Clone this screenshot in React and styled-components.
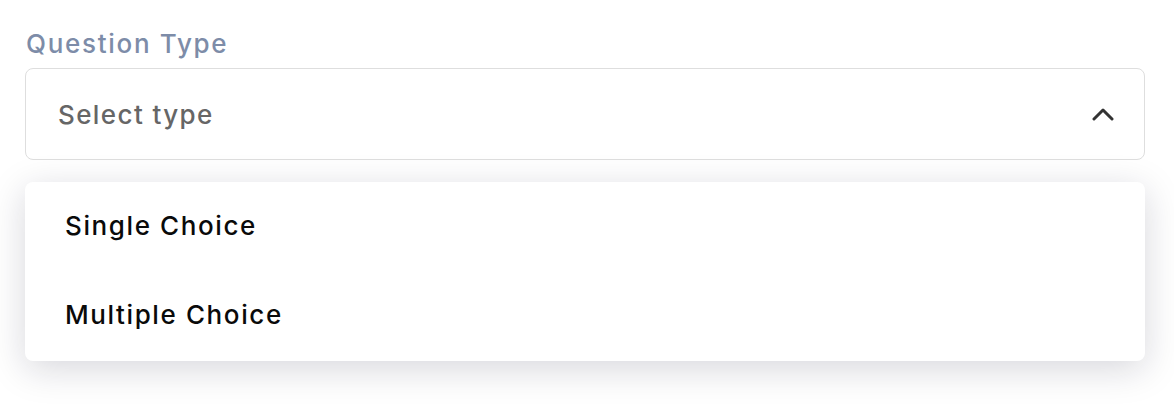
import React from "react";
import styled, { createGlobalStyle } from "styled-components";

const Global = createGlobalStyle`
  html, body { margin: 0; padding: 0; background: #ffffff; }
  body { font-family: Inter, "Noto Sans", sans-serif; }
`;

const Page = styled.div`
  min-height: 408px;
  box-sizing: border-box;
  padding: 28px 29px 0 25px;
  display: flex;
  flex-direction: column;
`;

const Label = styled.div`
  font-size: 26px;
  font-weight: 500;
  letter-spacing: 1.7px;
  line-height: 32px;
  color: #7d8ca8;
  padding-left: 1px;
  margin-bottom: 8px;
`;

const SelectBox = styled.div`
  height: 92px;
  box-sizing: border-box;
  border: 1px solid #dedede;
  border-radius: 8px;
  display: flex;
  align-items: center;
  justify-content: space-between;
  padding: 0 30px 0 32px;
  background: #fff;
`;

const Placeholder = styled.span`
  font-size: 26px;
  font-weight: 500;
  letter-spacing: 1.4px;
  color: #666666;
`;

const Menu = styled.div`
  margin-top: 22px;
  border-radius: 8px;
  background: #fff;
  box-shadow: 0 8px 36px rgba(20, 20, 50, 0.17);
  display: flex;
  flex-direction: column;
  padding: 0 0 1px;
`;

const Item = styled.div`
  height: 89px;
  box-sizing: border-box;
  padding: 0 0 3px 40px;
  display: flex;
  align-items: center;
  font-size: 26px;
  font-weight: 500;
  letter-spacing: 1.6px;
  color: #0a0a0a;
`;

const Chevron = () => (
  <svg width="22" height="14" viewBox="0 0 22 14" fill="none" stroke="#333" strokeWidth="3" strokeLinecap="round" strokeLinejoin="round">
    <path d="M2 12 L11 3 L20 12" />
  </svg>
);

export default function App() {
  return (
    <>
      <Global />
      <Page>
        <Label>Question Type</Label>
        <SelectBox>
          <Placeholder>Select type</Placeholder>
          <Chevron />
        </SelectBox>
        <Menu>
          <Item>Single Choice</Item>
          <Item>Multiple Choice</Item>
        </Menu>
      </Page>
    </>
  );
}
